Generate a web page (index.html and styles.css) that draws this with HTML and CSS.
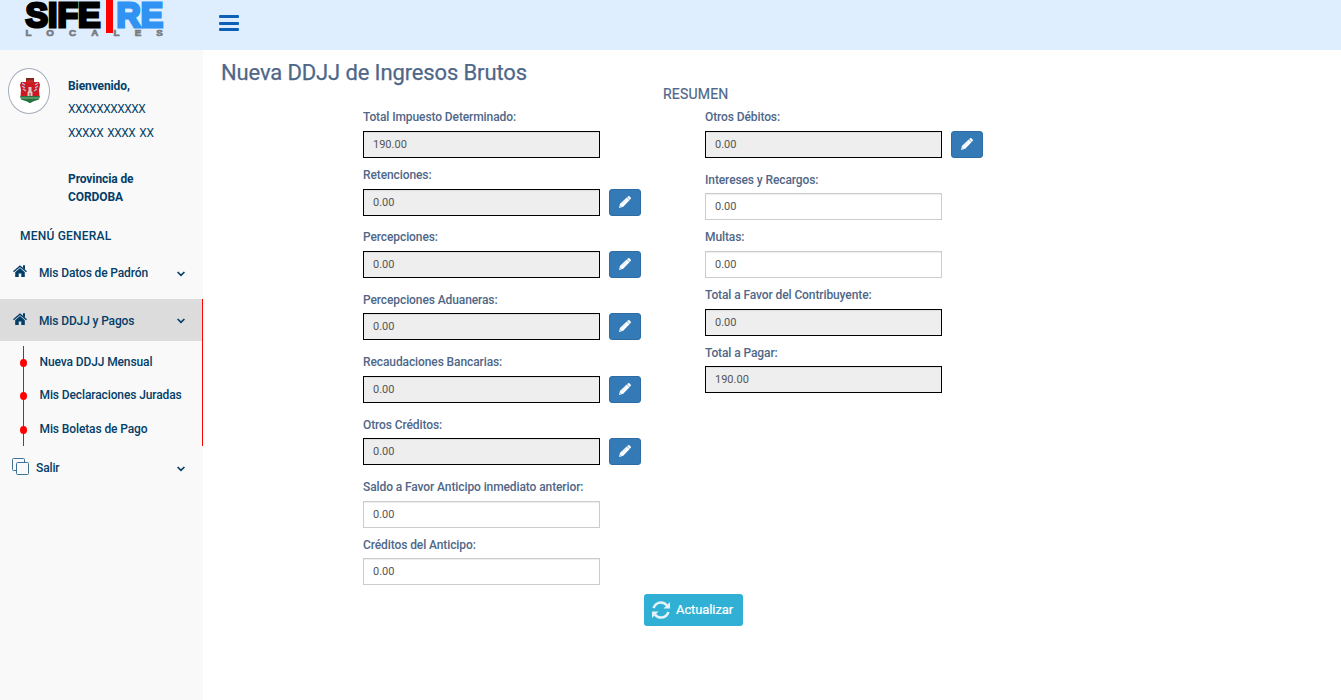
FILE: index.html
```html
<!DOCTYPE html>
<html lang="es">
<head>
<meta charset="utf-8">
<title>Nueva DDJJ de Ingresos Brutos</title>
<link rel="stylesheet" href="styles.css">
</head>
<body>
<svg class="defs" width="0" height="0" aria-hidden="true">
  <symbol id="pencil" viewBox="0 0 12 12"><path fill="#fff" d="M8.200 .9 9.200 .2Q9.800-.1 10.400.3L11.800 1.700Q12.200 2.200 11.800 2.800L10.700 3.900 8 1.100ZM7.700 1.500 10.500 4.300 4.200 10.800 0 12 .9 7.900Z"/><path d="M.8 9.500 2.400 11.100" stroke="#337ab7" stroke-width=".5"/><path d="M2.500 8.300 7.500 3.400" stroke="#9fc0de" stroke-width=".4"/></symbol>
  <symbol id="house" viewBox="0 0 14 12"><path fill="none" stroke="currentColor" stroke-width="1.400" d="M.5 6.800 7 1.200l6.500 5.600"/><path fill="currentColor" d="M10 .3h2v4.300l-2-1.700zM2.200 7.200 7 3.100l4.800 4.100V12H8.300V8.500H5.700V12H2.200z"/></symbol>
  <symbol id="chevron" viewBox="0 0 8 6"><path fill="none" stroke="currentColor" stroke-width="1.700" d="m.6 1 3.400 3.300L7.400 1"/></symbol>
</svg>
<header class="topbar">
  <svg class="logo" width="142" height="40" viewBox="0 0 142 40">
    <g font-family="Liberation Sans, sans-serif" font-weight="bold">
      <text x="1.500" y="26.500" font-size="35.500" textLength="75" lengthAdjust="spacingAndGlyphs" stroke="#000" stroke-width="3">SIFE</text>
      <text x="92.500" y="26.500" font-size="35.500" fill="#3093f3" textLength="46.500" lengthAdjust="spacingAndGlyphs" stroke="#3093f3" stroke-width="3">RE</text>
      <text x="1.500 22.300 45 67.300 89.500 110.700 132.300" y="36.200" font-size="9.800" fill="#777c81" stroke="#777c81" stroke-width=".7">LOCALES</text>
    </g>
    <path fill="red" d="M82 0h7v33h-7z"/>
  </svg>
  <span class="burger"><i></i><i></i><i></i></span>
</header>
<div class="layout">
  <aside class="sidebar">
    <div class="profile">
      <span class="avatar">
        <svg width="22" height="26" viewBox="0 0 22 26">
          <path fill="#cf171f" d="M7 1h8v3l5 0 1 3-1 5 .5 6H1.500L2 12 1 7l1-3h5z"/>
          <path fill="#85251f" d="M7 0h8v3H7z"/><path fill="#c42a28" d="M8 2h6v3H8z"/>
          <path fill="#27733f" d="M1 18h20l-1 3.500-6 2-3 1.800-3-1.800-6-2z"/>
          <path stroke="#a9bf9f" stroke-width=".8" d="M2 20h18"/>
          <path stroke="#b7c0e0" stroke-width="1.300" d="m3 5 3 2M3 8l3 2M4 11l3 2M19 5l-3 2M19 8l-3 2M18 11l-3 2"/>
          <path fill="#dcc6c3" d="M9.500 9h3v4l1 1v4H8.500v-4l1-1z"/><path fill="#ab383c" d="M10.500 15h1v3h-1z"/>
        </svg>
      </span>
      <div class="who">
        <p><b>Bienvenido,</b></p><p class="xs">XXXXXXXXXXX</p><p class="xs two">XXXXX XXXX XX</p>
        <p class="prov"><b>Provincia de<br>CORDOBA</b></p>
      </div>
    </div>
    <h3 class="menu-title">MENÚ GENERAL</h3>
    <nav>
      <a class="item"><svg class="house"><use href="#house"/></svg><span>Mis Datos de Padrón</span><svg class="chev"><use href="#chevron"/></svg></a>
      <div class="open">
        <a class="item active"><svg class="house"><use href="#house"/></svg><span>Mis DDJJ y Pagos</span><svg class="chev"><use href="#chevron"/></svg></a>
        <ul class="sub"><li>Nueva DDJJ Mensual</li><li>Mis Declaraciones Juradas</li><li>Mis Boletas de Pago</li></ul>
      </div>
      <a class="item exit"><svg class="copy" viewBox="0 0 17 17"><path d="M4 12.500H1.500Q.5 12.500.5 11.500v-10Q.5.500 1.500.500h10q1 0 1 1V4M5.500 4.500h10q1 0 1 1v10q0 1-1 1h-10q-1 0-1-1v-10q0-1 1-1z" fill="none" stroke="#3f7295"/></svg><span>Salir</span><svg class="chev"><use href="#chevron"/></svg></a>
    </nav>
  </aside>
  <main class="content">
    <h1>Nueva DDJJ de Ingresos Brutos</h1>
    <h2>RESUMEN</h2>
    <div class="columns">
      <div class="col">
        <div class="field"><label>Total Impuesto Determinado:</label><div class="row"><input value="190.00" readonly></div></div>
        <div class="field edit"><label>Retenciones:</label><div class="row"><input value="0.00" readonly><button class="pen"><svg><use href="#pencil"/></svg></button></div></div>
        <div class="field edit"><label>Percepciones:</label><div class="row"><input value="0.00" readonly><button class="pen"><svg><use href="#pencil"/></svg></button></div></div>
        <div class="field edit"><label>Percepciones Aduaneras:</label><div class="row"><input value="0.00" readonly><button class="pen"><svg><use href="#pencil"/></svg></button></div></div>
        <div class="field edit"><label>Recaudaciones Bancarias:</label><div class="row"><input value="0.00" readonly><button class="pen"><svg><use href="#pencil"/></svg></button></div></div>
        <div class="field edit"><label>Otros Créditos:</label><div class="row"><input value="0.00" readonly><button class="pen"><svg><use href="#pencil"/></svg></button></div></div>
        <div class="field"><label>Saldo a Favor Anticipo inmediato anterior:</label><div class="row"><input value="0.00"></div></div>
        <div class="field"><label>Créditos del Anticipo:</label><div class="row"><input value="0.00"></div></div>
      </div>
      <div class="col">
        <div class="field edit"><label>Otros Débitos:</label><div class="row"><input value="0.00" readonly><button class="pen"><svg><use href="#pencil"/></svg></button></div></div>
        <div class="field"><label>Intereses y Recargos:</label><div class="row"><input value="0.00"></div></div>
        <div class="field"><label>Multas:</label><div class="row"><input value="0.00"></div></div>
        <div class="field"><label>Total a Favor del Contribuyente:</label><div class="row"><input value="0.00" readonly></div></div>
        <div class="field"><label>Total a Pagar:</label><div class="row"><input value="190.00" readonly></div></div>
      </div>
    </div>
    <button class="refresh"><svg width="18" height="18" viewBox="0 0 18 18"><path fill="none" stroke="#e3f3f8" stroke-width="2.500" d="M1.500 7Q3.500 1.500 9 1.400q3.500 0 6 3M16.500 11Q14.500 16.500 9 16.600q-3.500 0-6-3"/><path fill="#e3f3f8" d="M18 1v6.500h-6.500zM0 17v-6.500h6.500z"/></svg><span>Actualizar</span></button>
  </main>
</div>
</body>
</html>
```
FILE: styles.css
```css
* { box-sizing: border-box; }
body { margin: 0; font-family: Roboto, sans-serif; background: #fff; color: #4f6788; overflow: hidden; }
p, h1, h2, h3, ul { margin: 0; padding: 0; }
.defs { display: block; }
.topbar { height: 50px; background: #deeefe; display: flex; align-items: flex-start; padding-left: 24px; }
.logo { display: block; flex: none; }
.burger { display: flex; flex-direction: column; gap: 3.500px; margin: 15px 0 0 52.500px; }
.burger i { display: block; width: 20px; height: 3px; border-radius: 1px; background: #0c60b5; }
.layout { display: flex; height: 650px; }
.sidebar { width: 203px; background: #f9f9f9; color: #033e68; flex: none; }
.profile { display: flex; height: 174px; padding: 18px 0 0 8px; }
.avatar { width: 42px; height: 46px; border: 1px solid #a3abba; border-radius: 50%; background: #fff; display: flex; align-items: center; justify-content: center; flex: none; padding-left: 1px; }
.who { margin: 9px 0 0 18px; font-size: 12px; line-height: 18px; }
.who b { letter-spacing: -.1px; }
.who .xs { margin-top: 5px; font-size: 11.900px; letter-spacing: -.42px; }
.who .two { margin-top: 6px; word-spacing: 1.500px; }
.who .prov { margin-top: 28px; }
.menu-title { font-size: 12px; font-weight: 500; line-height: 18px; letter-spacing: .22px; padding: 3px 0 0 20px; }
nav { padding-top: 6px; }
.item { display: flex; align-items: center; height: 42px; padding: 0 18px 0 13px; font-size: 12px; font-weight: 500; letter-spacing: -.13px; }
.item span { padding-top: 2px; }
.house { width: 14px; height: 12px; margin: -2px 12px 0 0; }
.chev { width: 8px; height: 6px; margin-left: auto; margin-top: 3px; }
.open { margin-top: 6px; border-right: 1px solid red; height: 147px; }
.active { background: #dcdcdc; padding-right: 17px; }
.active .chev { margin-top: 2px; }
.sub { list-style: none; margin: 5px 0 0 23px; border-left: 1px solid red; height: 100px; }
.sub li { position: relative; height: 33.400px; line-height: 33px; padding-left: 15.500px; font-size: 12px; font-weight: 500; letter-spacing: -.11px; }
.sub li::before { content: ""; position: absolute; left: -4px; top: 13px; width: 7px; height: 8px; border-radius: 50%; background: red; }
.copy { width: 17px; height: 17px; margin: -2px 7px 0 -1px; }
.content { flex: 1; min-width: 0; }
h1 { font-size: 22px; line-height: 26px; font-weight: 400; letter-spacing: -.13px; margin: 10px 0 0 18px; -webkit-text-stroke: .25px; }
h2 { font-size: 14px; line-height: 18px; font-weight: 400; letter-spacing: .2px; margin: -1px 0 0 460px; -webkit-text-stroke: .2px; }
.columns { display: flex; gap: 64px; margin: 5px 0 0 160px; height: 486px; }
.col { width: 278px; }
.field { height: 57.600px; }
.field.edit { height: 62.400px; }
label { display: block; font-size: 12px; font-weight: 500; line-height: 18px; padding-top: .4px; margin-bottom: 4.600px; letter-spacing: -.1px; }
.row { display: flex; gap: 9px; }
input { width: 237px; height: 27px; border: 1px solid #ccc; border-radius: 0; background: #fff; padding: 0 9px; font: 11px Roboto, sans-serif; color: #555; box-shadow: inset 0 1px 1px rgba(0,0,0,.075); }
input[readonly] { background: #eee; border-color: #000; }
.pen { width: 32px; height: 27px; border: 1px solid #2e6da4; border-radius: 3px; background: #337ab7; padding: 0 1px 1px 0; display: flex; align-items: center; justify-content: center; }
.pen svg { width: 12px; height: 12px; }
.refresh { display: flex; align-items: center; gap: 6px; width: 99px; height: 32px; margin-left: 441px; padding: 0 8px; border: 0; border-radius: 3px; background: #31b0d5; color: #fff; font: 13px Roboto, sans-serif; letter-spacing: -.1px; }
.refresh span { padding-bottom: 2px; -webkit-text-stroke: .2px; }
```
